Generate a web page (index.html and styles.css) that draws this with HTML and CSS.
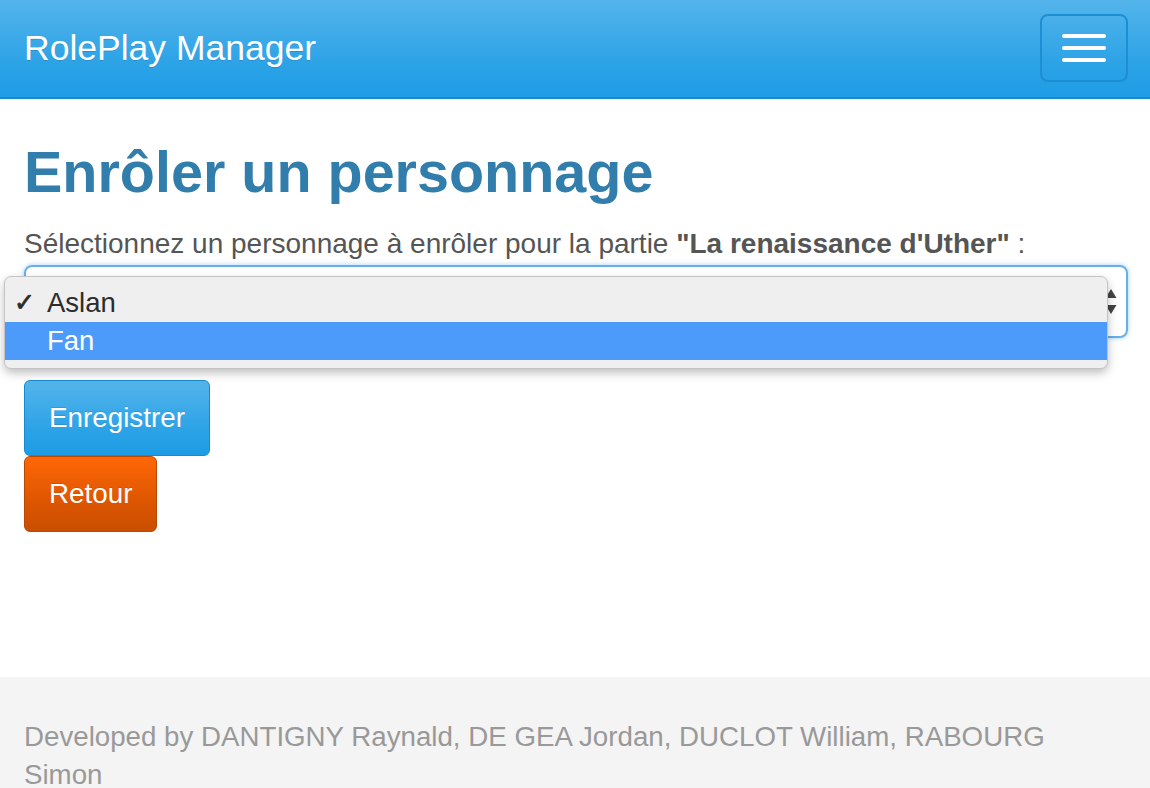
FILE: index.html
```html
<!DOCTYPE html>
<html lang="fr">
<head>
<meta charset="utf-8">
<title>RolePlay Manager</title>
<link rel="stylesheet" href="styles.css">
</head>
<body>
<header class="navbar">
  <a class="brand" href="#">RolePlay Manager</a>
  <button class="toggle" type="button" aria-label="Menu">
    <span class="bar"></span><span class="bar"></span><span class="bar"></span>
  </button>
</header>
<main class="content">
  <h1 class="title">Enrôler un personnage</h1>
  <p class="lead">Sélectionnez un personnage à enrôler pour la partie <strong>"La renaissance d'Uther"</strong> :</p>
  <div class="select-wrap">
    <div class="select">
      <svg class="arrows" width="12" height="28" viewBox="0 0 12 28"><path d="M6 1 L11.5 10 L0.5 10 Z M0.5 17 L11.5 17 L6 26 Z" fill="#444"/></svg>
    </div>
    <ul class="popup">
      <li class="opt"><span class="check">✓</span>Aslan</li>
      <li class="opt active">Fan</li>
    </ul>
  </div>
  <div class="actions">
    <button class="btn btn-primary" type="button">Enregistrer</button>
    <button class="btn btn-warning" type="button">Retour</button>
  </div>
</main>
<footer class="footer">
  <p class="credits">Developed by DANTIGNY Raynald, DE GEA Jordan, DUCLOT William, RABOURG Simon</p>
</footer>
</body>
</html>
```
FILE: styles.css
```css
html, body {
  margin: 0;
  padding: 0;
}
body {
  font-family: "Liberation Sans", Arial, sans-serif;
  font-size: 27.6px;
  line-height: 38px;
  color: #555555;
  background: #ffffff;
}
.navbar {
  height: 97px;
  border-bottom: 2px solid #178acc;
  background: linear-gradient(#54b4eb, #2fa4e7 60%, #1d9ce5);
  display: flex;
  align-items: center;
  justify-content: space-between;
  padding: 0 22px 0 24px;
}
.brand {
  color: #ffffff;
  text-decoration: none;
  font-size: 35.5px;
  line-height: 40px;
  text-shadow: 0 1px 0 rgba(0,0,0,0.12);
  margin-top: -1px;
}
.toggle {
  width: 88px;
  height: 68px;
  box-sizing: border-box;
  border: 2px solid #1b8fd2;
  border-radius: 8px;
  background: transparent;
  display: flex;
  flex-direction: column;
  align-items: center;
  justify-content: center;
  gap: 8px;
  padding: 0;
  margin-top: -2px;
}
.bar {
  display: block;
  width: 44px;
  height: 4px;
  border-radius: 2px;
  background: #ffffff;
}
.content {
  padding: 42px 22px 145px 24px;
}
.title {
  margin: 0 0 21px;
  font-size: 57.5px;
  line-height: 63px;
  font-weight: bold;
  color: #317eac;
}
.lead {
  margin: 0 0 2px;
  font-size: 28px;
}
.lead strong {
  font-weight: bold;
}
.select-wrap {
  position: relative;
}
.select {
  height: 73px;
  box-sizing: border-box;
  border: 2px solid #66afe9;
  border-radius: 8px;
  box-shadow: 0 0 5px rgba(102,175,233,0.6);
  display: flex;
  align-items: center;
  justify-content: flex-end;
  padding-right: 9px;
}
.arrows {
  display: block;
}
.popup {
  position: absolute;
  left: -20px;
  top: 11px;
  width: 1104px;
  box-sizing: border-box;
  margin: 0;
  padding: 7px 0 8px;
  list-style: none;
  background: #efefef;
  border: 1px solid #c4c4c4;
  border-radius: 7px;
  box-shadow: 0 4px 10px rgba(0,0,0,0.25);
  font-size: 27.5px;
}
.opt {
  position: relative;
  height: 38px;
  line-height: 38px;
  padding-left: 42px;
  color: #2c2c2c;
}
.opt.active {
  background: #4c9bfa;
  color: #ffffff;
}
.check {
  position: absolute;
  left: 9px;
  top: 0;
  font-family: "DejaVu Sans", sans-serif;
  font-weight: bold;
  font-size: 25px;
  color: #2c2c2c;
  -webkit-text-stroke: 0.8px #2c2c2c;
}
.actions {
  margin-top: 42px;
  display: flex;
  flex-direction: column;
  align-items: flex-start;
}
.btn {
  font-family: "Liberation Sans", Arial, sans-serif;
  font-size: 27.8px;
  line-height: 38px;
  padding: 18px 24px;
  border-radius: 6px;
  color: #ffffff;
  text-shadow: 0 -1px 0 rgba(0,0,0,0.1);
  cursor: pointer;
}
.btn-primary {
  background: linear-gradient(#54b4eb, #2fa4e7 60%, #1d9ce5);
  border: 1px solid #178acc;
}
.btn-warning {
  background: linear-gradient(#ff6707, #dd5600 60%, #c94e00);
  border: 1px solid #b94800;
}
.footer {
  background: #f4f4f4;
  padding: 41px 22px 40px 24px;
}
.credits {
  margin: 0;
  color: #999999;
  font-size: 27.7px;
}
```
